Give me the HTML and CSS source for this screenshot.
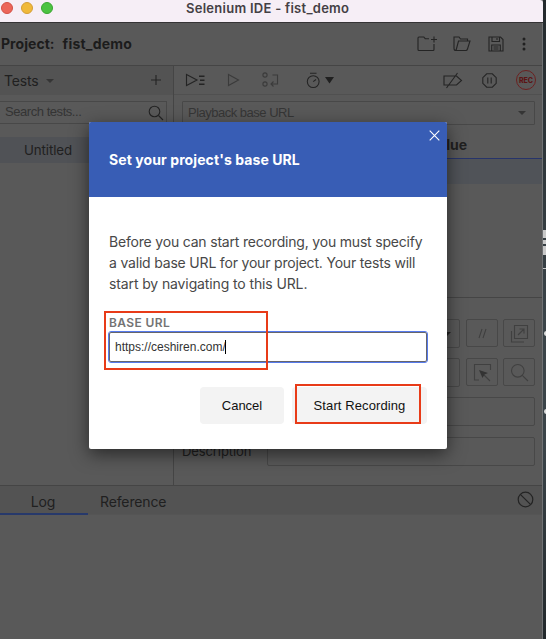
FILE: index.html
```html
<!DOCTYPE html>
<html lang="en">
<head>
<meta charset="utf-8">
<title>Selenium IDE - fist_demo</title>
<link rel="stylesheet" href="styles.css">
</head>
<body>
<div class="window">
  <header class="titlebar">
    <div class="lights"><i class="red"></i><i class="yellow"></i><i class="green"></i></div>
    <span class="t window-title">Selenium IDE - fist_demo</span>
  </header>
  <div class="project">
    <span class="t project-label">Project:</span><span class="t project-name">fist_demo</span>
    <div class="project-icons">
      <svg width="20" height="16" viewBox="0 0 20 16"><path d="M12 2.7H8.2L6.8 1H2Q1 1 1 2V13.5Q1 14.5 2 14.5H16Q17 14.5 17 13.5V8M14 3.5H20M17 .5V6.5"/></svg>
      <svg width="18" height="16" viewBox="0 0 18 16"><path d="M3 14.5Q1 14.5 1 12.5V1H6L7.5 3H14.5V5M3 14.5L5.5 5H17L14.5 13Q14 14.5 13 14.5Z"/></svg>
      <svg width="16" height="16" viewBox="0 0 16 16"><path d="M1 1H12.5L15 3.5V15H1ZM4 1V5.5H11.5V1M9 2V4M3.7 15V9H12.3V15M5.5 11H10.5M5.5 13H10.5"/></svg>
      <svg width="4" height="16" viewBox="0 0 4 16"><g class="solid"><circle cx="2" cy="3" r="1.5"/><circle cx="2" cy="8" r="1.5"/><circle cx="2" cy="13" r="1.5"/></g></svg>
    </div>
  </div>
  <main class="workspace">
    <aside class="sidebar">
      <div class="tests-head"><span class="t tests-label">Tests</span><b class="caret"></b>
        <svg class="plus" width="12" height="12" viewBox="0 0 12 12"><path d="M6 1V11M1 6H11"/></svg></div>
      <div class="search"><span class="t arial">Search tests...</span>
        <svg width="16" height="16" viewBox="0 0 16 16"><circle cx="6.5" cy="6.5" r="5.3"/><path d="M10.5 10.5L15 15"/></svg></div>
      <div class="test-row"><span class="t">Untitled</span></div>
    </aside>
    <section class="editor">
      <div class="toolbar">
        <svg class="run-all" width="20" height="14" viewBox="0 0 20 14"><path d="M1.5 1.5L12 7L1.5 12.5Z"/><path class="thick" d="M14 3.2H19.5M15 7.2H19.5M14 11.2H19.5"/></svg>
        <svg class="run faint" width="13" height="14" viewBox="0 0 13 14"><path d="M1.5 1.5L11.5 7L1.5 12.5Z"/></svg>
        <svg class="step faint" width="18" height="16" viewBox="0 0 18 16"><circle cx="3" cy="3" r="2.1"/><circle cx="3" cy="12" r="2.1"/><path d="M10.5 3H15.5V12H9M11.5 9.5L9 12L11.5 14.5"/></svg>
        <svg class="speed" width="28" height="17" viewBox="0 0 28 17"><circle cx="7.2" cy="9.6" r="5.9"/><path d="M4 1.3H10.5M7.2 9.6L10 7.5"/><path class="fill" d="M19 5H28L23.5 11.5Z"/></svg>
        <svg class="breakpoints" width="20" height="17" viewBox="0 0 20 17"><path d="M1 4H13.5L18.5 8.5L13.5 13H1ZM3.5 16L14.5 1"/></svg>
        <svg class="pause" width="15" height="15" viewBox="0 0 15 15"><path d="M4.7 .8H10.3L14.2 4.7V10.3L10.3 14.2H4.7L.8 10.3V4.7ZM5.8 4.5V10.5M9.2 4.5V10.5"/></svg>
        <div class="rec"><span class="t">REC</span></div>
      </div>
      <div class="base"><span class="t arial">Playback base URL</span><b class="caret"></b></div>
      <div class="columns"><span class="t">Value</span></div>
      <div class="command-row"></div>
      <div class="form">
        <div class="form-row first"><div class="field"><b class="caret dark"></b></div>
          <div class="tool"><svg width="11" height="11" viewBox="0 0 11 11"><path d="M5 1L2 10M9 1L6 10"/></svg></div>
          <div class="tool"><svg width="19" height="19" viewBox="0 0 19 19"><path d="M4.5 1.5H17.5V14.5H4.5ZM1.5 7V18H14M8 11L14 5M9.5 5H14V9.5"/></svg></div></div>
        <div class="form-row second"><div class="field"></div>
          <div class="tool"><svg width="19" height="19" viewBox="0 0 19 19"><path d="M6 17H1.5V1.5H17.5V7M11 12L17 18"/><path class="fill" d="M6 7L15 10L11.5 11.5L9.5 15Z"/></svg></div>
          <div class="tool"><svg width="19" height="19" viewBox="0 0 19 19"><circle cx="7.8" cy="7.8" r="6.3"/><path d="M12.3 12.3L18 18"/></svg></div></div>
        <div class="form-row third"><div class="field"></div></div>
        <div class="form-row fourth"><span class="t description">Description</span><div class="field"></div></div>
      </div>
    </section>
  </main>
  <nav class="tabs">
    <div class="tab active"><span class="t">Log</span></div><div class="tab"><span class="t">Reference</span></div>
    <svg width="17" height="17" viewBox="0 0 17 17"><circle cx="8.5" cy="8.5" r="7.3"/><path d="M3.3 3.3L13.7 13.7"/></svg>
  </nav>
  <div class="log"></div>
</div>
<div class="desktop"><i class="patch p1"></i><i class="patch p2"></i><i class="patch p3"></i><i class="rule"></i><i class="dot d1"></i><i class="dot d2"></i></div>

<div class="dialog">
  <div class="dialog-head"><span class="t">Set your project's base URL</span>
    <svg class="close" width="11" height="11" viewBox="0 0 11 11"><path d="M.7 .7L10.3 10.3M10.3 .7L.7 10.3"/></svg></div>
  <div class="dialog-body">
    <p><span class="t">Before you can start recording, you must specify</span><br><span class="t">a valid base URL for your project. Your tests will</span><br><span class="t l3">start by navigating to this URL.</span></p>
    <span class="t label">BASE URL</span>
    <div class="url"><span class="t arial">https://ceshiren.com/</span><i></i></div>
    <div class="buttons"><button class="cancel"><span class="t">Cancel</span></button><button class="start"><span class="t">Start Recording</span></button></div>
  </div>
  <div class="mark mark-url"></div>
  <div class="mark mark-start"></div>
</div>
</body>
</html>
```
FILE: styles.css
```css
* { box-sizing: border-box; }
body { margin: 0; width: 546px; height: 639px; overflow: hidden; display: flex; position: relative; background: #30373b; font: 14px/20px Inter, sans-serif; color: #202020; }
.t { display: inline-block; white-space: nowrap; }
.arial { font-family: "Liberation Sans", sans-serif; }
svg { display: block; flex: none; fill: none; stroke: #242424; stroke-width: 1.1; }
.fill, .solid { fill: #202020; stroke: none; }
.thick { stroke-width: 1.5; }
.faint { stroke: #3b3b3b; }
.caret { width: 0; height: 0; border: 4px solid transparent; border-top-color: #353535; border-bottom: 0; }

.window { width: 543px; height: 639px; background: #595959; border-right: 1px solid #707274; flex: none; display: flex; flex-direction: column; }
.titlebar { height: 23px; flex: none; background: #f6eef6; border-bottom: 1px solid #353335; display: flex; align-items: flex-start; margin-right: -1px; border-top-right-radius: 3px; }
.lights { display: flex; gap: 8px; padding: 2px 0 0 1px; width: 186px; }
.lights i { width: 12px; height: 12px; border-radius: 50%; border: 1px solid #d35045; background: #ec6559; }
.lights .yellow { border-color: #d49e36; background: #f0b93a; }
.lights .green { border-color: #3aa531; background: #4bc341; }
.window-title { font-weight: 600; font-size: 13px; line-height: 16px; color: #444044; letter-spacing: .27px; }
.project { height: 43px; flex: none; border-bottom: 1px solid #454545; display: flex; align-items: center; padding-left: 1px; font-weight: 700; color: #1c1c1c; }
.project-label { letter-spacing: .05px; }
.project-name { margin-left: 8px; letter-spacing: .2px; }
.project-icons { margin-left: auto; display: flex; padding-right: 16px; }
.project-icons svg:nth-child(2) { margin-left: 16px; }
.project-icons svg:nth-child(3) { margin-left: 17px; }
.project-icons svg:nth-child(4) { margin-left: 18px; }
.workspace { height: 419px; display: flex; flex: none; }
.sidebar { width: 174px; border-right: 1px solid #454545; }
.tests-head { height: 29px; background: #535353; display: flex; align-items: center; padding: 0 11px 0 4px; }
.tests-label { letter-spacing: -.2px; }
.tests-head .caret { margin-left: 8px; }
.plus { margin-left: auto; margin-bottom: 2px; }
.search { height: 23px; width: 167px; margin-top: 6px; border: 1px solid #484848; border-left: 0; display: flex; align-items: center; justify-content: space-between; padding: 0 2px 0 5px; color: #343434; font-size: 13px; letter-spacing: -.45px; }
.search .t { margin-top: -1px; }
.test-row { margin-top: 13px; height: 26px; background: #505256; padding: 3px 0 0 24px; font-size: 13.3px; letter-spacing: -.1px; }
.editor { width: 368px; }
.toolbar { height: 29px; border-bottom: 1px solid #505050; display: flex; align-items: center; padding-left: 11px; }
.run { margin-left: 22px; }
.step { margin-left: 22px; }
.speed { margin-left: 26px; }
.breakpoints { margin-left: 109px; }
.pause { margin-left: 19px; }
.rec { margin-left: 19px; width: 20px; height: 20px; border: 1px solid #6b2020; border-radius: 50%; display: flex; flex: none; align-items: center; justify-content: center; font-size: 7px; font-weight: 800; line-height: 8px; color: #5c1414; }
.rec .t { padding-top: 1px; }
.base { margin: 6px 0 0 8px; width: 353px; height: 24px; border: 1px solid #484848; border-radius: 1px; display: flex; align-items: center; justify-content: space-between; padding: 0 8px 0 5px; color: #363636; font-size: 13px; letter-spacing: -.5px; }
.columns { height: 34px; border-bottom: 1px solid #27346a; padding: 10px 0 0 254.5px; font-weight: 700; }
.command-row { height: 25px; background: #505358; }
.form { margin-top: 113px; border-top: 1px solid #454545; padding: 21px 7px 0 8px; }
.form-row { display: flex; justify-content: flex-end; gap: 6px; height: 29px; }
.second { margin-top: 10px; }
.third { margin-top: 10px; }
.fourth { margin-top: 11px; }
.field { width: 268px; border: 1px solid #484848; border-radius: 2px; }
.first .field, .second .field { width: 194px; display: flex; align-items: center; justify-content: flex-end; padding-right: 8px; }
.caret.dark { border-top-color: #222; }
.tool { width: 32px; height: 28px; border: 1px solid #484848; border-radius: 2px; display: grid; place-items: center; }
.form-row .tool + .tool { margin-left: -1px; }
.tool svg { stroke: #404040; }
.tool .fill { fill: #333; }
.description { margin: 4px auto 0 0; font-size: 13px; letter-spacing: -.1px; }
.tabs { height: 30px; flex: none; border-top: 1px solid #454545; background: #535353; border-bottom: 1px solid #555; display: flex; align-items: flex-start; }
.tab { padding: 6px 12px 0; height: 29px; letter-spacing: -.13px; }
.active { width: 88px; text-align: center; padding-left: 10px; border-bottom: 2px solid #27396b; }
.tabs svg { margin: 5px 8px 0 auto; stroke-width: 1.2; }
.log { height: 124px; background: #595959; }

.desktop { width: 3px; flex: none; background: linear-gradient(#242a2d, #3b4449 50%, #3b4449 70%, #22282b); position: relative; overflow: hidden; }
.desktop i { position: absolute; left: 0; width: 3px; background: #c8c8c8; }
.p1 { top: 230px; height: 8px; } .p2 { top: 240px; height: 4px; } .p3 { top: 246px; height: 9px; } .rule { top: 268px; height: 1px; }
.desktop .dot { left: 1px; width: 5px; height: 5px; border-radius: 50%; background: #ddd; }
.d1 { top: 331px; } .d2 { top: 409px; }

.dialog { position: absolute; left: 89px; top: 122px; width: 358px; height: 327px; background: #fff; border-radius: 2px; box-shadow: 0 5px 18px rgba(0,0,0,.55); }
.dialog-head { height: 75px; background: #385db5; border-radius: 2px 2px 0 0; color: #fff; font-weight: 700; letter-spacing: .09px; padding: 28px 0 0 20px; position: relative; }
.close { position: absolute; right: 7px; top: 8px; stroke: #fff; }
.dialog-body { padding: 34px 20px 0; color: #484848; }
.dialog-body p { margin: 0; line-height: 21px; height: 84px; letter-spacing: -.19px; }
.l3 { letter-spacing: -.12px; }
.label { display: block; width: max-content; font-size: 12px; line-height: 16px; font-weight: 600; color: #737373; letter-spacing: .38px; }
.url { height: 32px; width: 320px; margin: 0 0 0 -1px; border: 1px solid #577bed; outline: 1px solid #66666c; outline-offset: -2px; border-radius: 3px; display: flex; align-items: center; padding-left: 6px; font-size: 12px; color: #333; }
.url i { width: 1px; height: 14px; margin-left: -1px; background: #000; }
.buttons { display: flex; justify-content: flex-end; gap: 8px; margin: 24px 0 0 0; }
button { height: 37px; border: 0; padding: 0; border-radius: 4px; background: #f3f3f3; color: #111; font: 13px/20px "Liberation Sans", sans-serif; }
.cancel { width: 84px; } .start { width: 135px; } .start .t { letter-spacing: .1px; }
.mark { position: absolute; border: 2px solid #e83b18; }
.mark-url { left: 15px; top: 189px; width: 164px; height: 59px; }
.mark-start { left: 206px; top: 262px; width: 126px; height: 40px; }
```
